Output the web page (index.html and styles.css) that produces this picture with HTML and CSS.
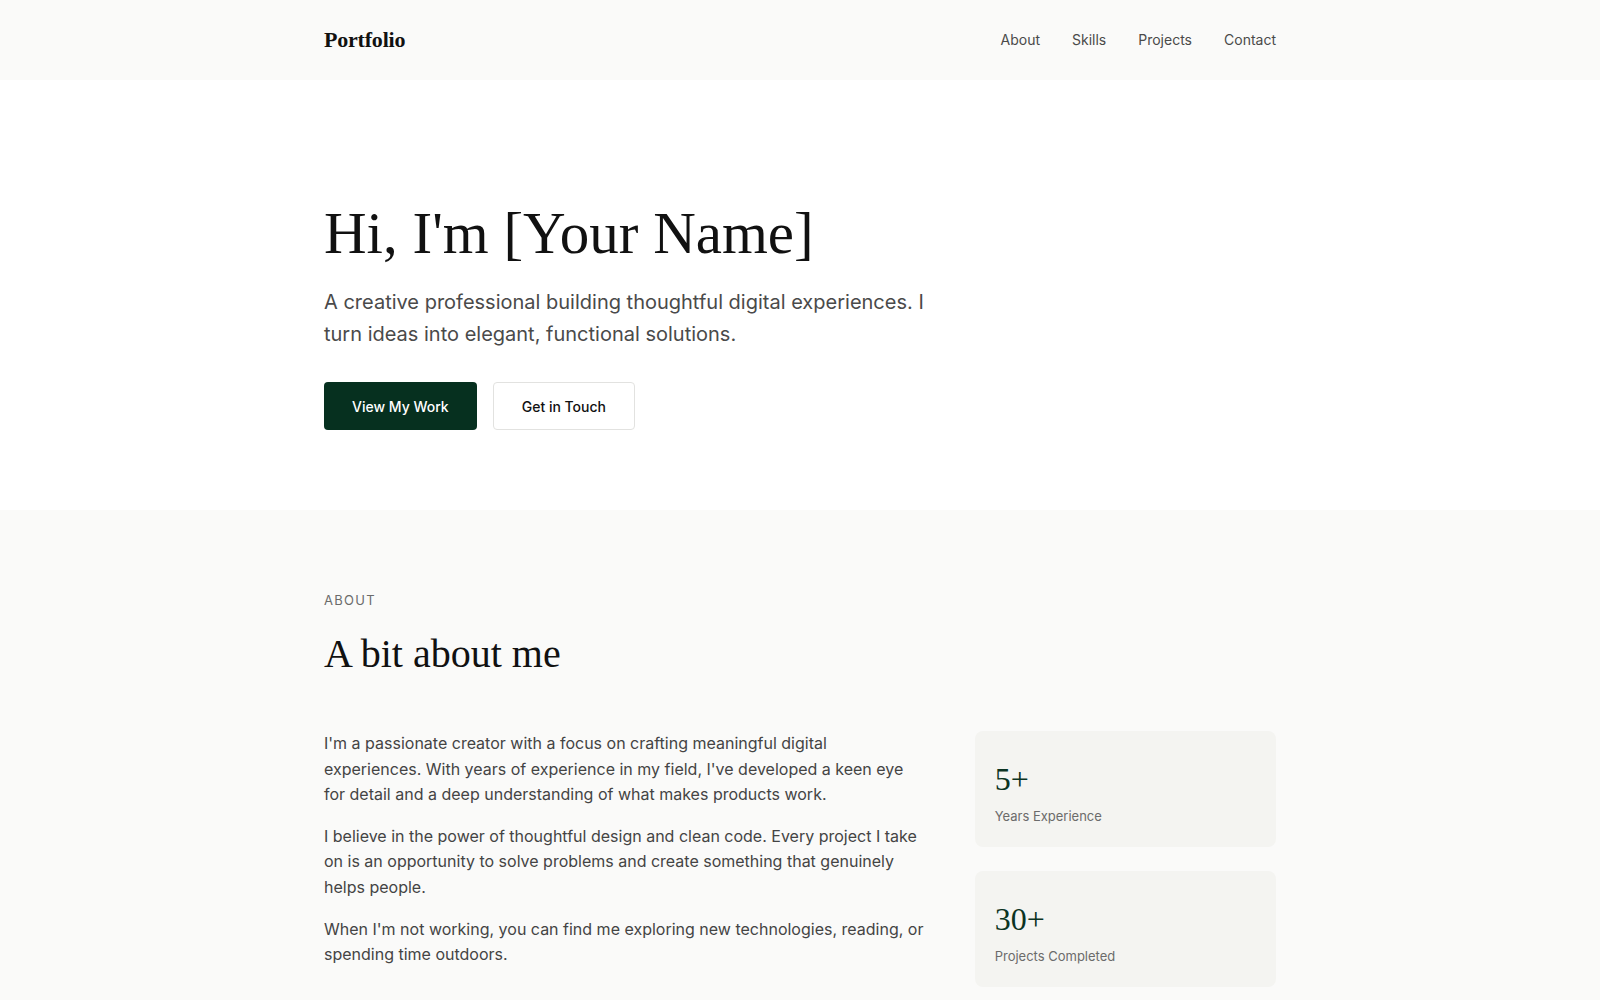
FILE: index.html
```html
<!DOCTYPE html>
<html lang="en">
<head>
<meta charset="utf-8">
<title>Portfolio</title>
<link rel="stylesheet" href="styles.css">
</head>
<body>
<header class="nav">
  <div class="container nav-inner">
    <a class="logo" href="#">Portfolio</a>
    <nav class="nav-links">
      <a href="#about">About</a>
      <a href="#skills">Skills</a>
      <a href="#projects">Projects</a>
      <a href="#contact">Contact</a>
    </nav>
  </div>
</header>
<main>
  <section class="hero">
    <div class="container">
      <h1 class="hero-title">Hi, I'm [Your Name]</h1>
      <p class="hero-text">A creative professional building thoughtful digital experiences. I turn ideas into elegant, functional solutions.</p>
      <div class="hero-actions">
        <a class="btn btn-primary" href="#projects">View My Work</a>
        <a class="btn btn-outline" href="#contact">Get in Touch</a>
      </div>
    </div>
  </section>
  <section class="about" id="about">
    <div class="container">
      <p class="section-label">About</p>
      <h2 class="section-title">A bit about me</h2>
      <div class="about-grid">
        <div class="about-text">
          <p>I'm a passionate creator with a focus on crafting meaningful digital experiences. With years of experience in my field, I've developed a keen eye for detail and a deep understanding of what makes products work.</p>
          <p>I believe in the power of thoughtful design and clean code. Every project I take on is an opportunity to solve problems and create something that genuinely helps people.</p>
          <p>When I'm not working, you can find me exploring new technologies, reading, or spending time outdoors.</p>
        </div>
        <div class="stats">
          <div class="stat-card">
            <div class="stat-number">5+</div>
            <div class="stat-label">Years Experience</div>
          </div>
          <div class="stat-card">
            <div class="stat-number">30+</div>
            <div class="stat-label">Projects Completed</div>
          </div>
        </div>
      </div>
    </div>
  </section>
</main>
</body>
</html>
```

FILE: styles.css
```css
* { box-sizing: border-box; }
html, body { margin: 0; padding: 0; }
body {
  font-family: Inter, "Noto Sans", sans-serif;
  color: #1a1a1a;
  background: #fafaf9;
}
a { text-decoration: none; color: inherit; }
.container {
  max-width: 1000px;
  margin: 0 auto;
  padding: 0 24px;
}
.nav {
  background: #fafaf9;
  height: 80px;
}
.nav-inner {
  height: 80px;
  display: flex;
  align-items: center;
  justify-content: space-between;
}
.logo {
  font-family: "Liberation Serif", serif;
  font-weight: 700;
  font-size: 22px;
  letter-spacing: -0.2px;
  color: #111;
}
.nav-links {
  display: flex;
  gap: 32px;
}
.nav-links a {
  font-size: 14px;
  line-height: 20px;
  color: #4a4a4a;
  margin-top: -1px;
}
.hero {
  background: #ffffff;
  padding: 121px 0 80px;
}
.hero-title {
  font-family: "Liberation Serif", serif;
  font-weight: 400;
  font-size: 59px;
  line-height: 65px;
  margin: 0 0 20px;
  color: #111;
}
.hero-text {
  font-size: 20px;
  line-height: 1.6;
  color: #4a4a4a;
  max-width: 600px;
  margin: 0 0 32px;
}
.hero-actions {
  display: flex;
  gap: 16px;
}
.btn {
  display: inline-flex;
  align-items: center;
  justify-content: center;
  height: 48px;
  padding: 0 28px;
  border-radius: 4px;
  font-size: 14px;
  font-weight: 500;
}
.btn-primary {
  background: #06301f;
  color: #fff;
}
.btn-outline {
  background: #fff;
  color: #111;
  border: 1px solid #e2e2e0;
}
.about {
  background: #fafaf9;
  padding: 80px 0 80px;
}
.section-label {
  margin: 0 0 20px;
  font-size: 13px;
  line-height: 20px;
  letter-spacing: 0.1em;
  text-transform: uppercase;
  color: #6b6b6b;
}
.section-title {
  font-family: "Liberation Serif", serif;
  font-weight: 400;
  font-size: 40px;
  line-height: 1.2;
  margin: 0 0 53px;
  color: #111;
}
.about-grid {
  display: grid;
  grid-template-columns: 2fr 1fr;
  gap: 48px;
  align-items: start;
}
.about-text p {
  margin: 0 0 16px;
  font-size: 16px;
  line-height: 1.6;
  color: #444;
}
.stats {
  display: flex;
  flex-direction: column;
  gap: 24px;
}
.stat-card {
  background: #f4f4f1;
  border-radius: 8px;
  padding: 29px 20px 20px;
  height: 116px;
}
.stat-number {
  font-family: "Liberation Serif", serif;
  font-size: 32px;
  line-height: 38px;
  color: #0b3322;
  margin-bottom: 8px;
}
.stat-label {
  font-size: 13px;
  line-height: 20px;
  color: #6b6b6b;
}
```
